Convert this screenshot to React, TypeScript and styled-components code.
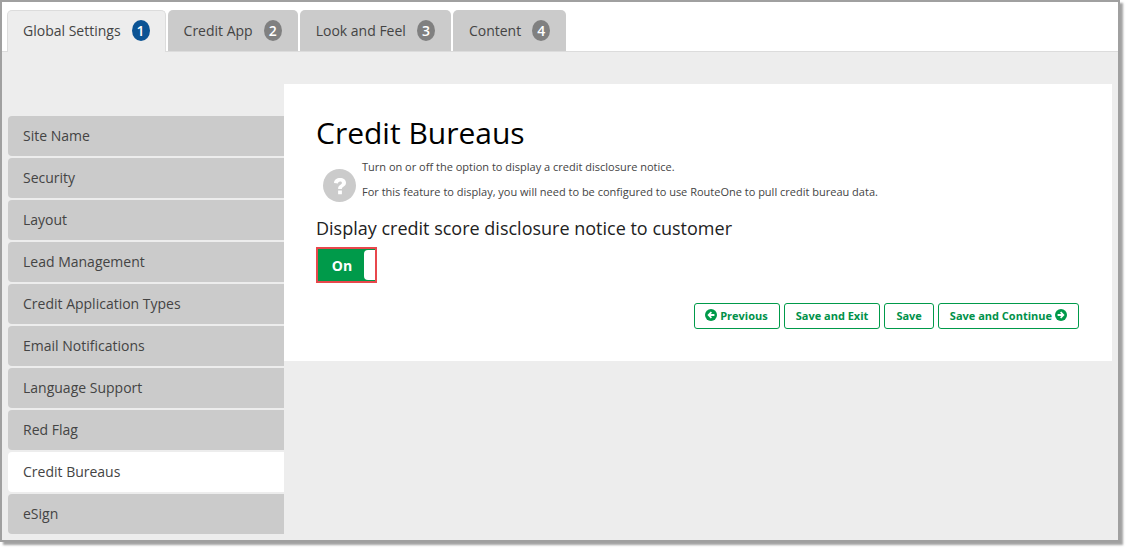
import React from "react";
import styled, { createGlobalStyle } from "styled-components";

const Global = createGlobalStyle`
  html, body { margin: 0; padding: 0; background: #fff; min-height: 549px; }
  body { font-family: "Open Sans", "Liberation Sans", sans-serif; color: #333; }
  * { box-sizing: border-box; }
`;

const Shot = styled.div`
  width: 1120px;
  height: 542px;
  border: 2px solid #a0a0a0;
  background: #ededed;
  box-shadow: 3px 3px 2px rgba(100, 100, 100, 0.6);
  display: flex;
  flex-direction: column;
`;

const TabBar = styled.div`
  height: 50px;
  background: #fff;
  border-bottom: 1px solid #dcdcdc;
  padding: 8px 0 0 5px;
  display: flex;
  gap: 2px;
  align-items: flex-end;
`;

const Tab = styled.div<{ $active?: boolean }>`
  height: ${(p) => (p.$active ? 42 : 41)}px;
  margin-bottom: ${(p) => (p.$active ? -1 : 0)}px;
  padding: 0 ${(p) => (p.$active ? 15 : 16)}px ${(p) => (p.$active ? 2 : 0)}px;
  display: flex;
  align-items: center;
  gap: 11px;
  border-radius: 5px 5px 0 0;
  font-size: 14px;
  color: #444;
  background: ${(p) => (p.$active ? "#ededed" : "#cbcbcb")};
  border: ${(p) => (p.$active ? "1px solid #dcdcdc" : "none")};
  border-bottom: none;
`;

const Badge = styled.span<{ $active?: boolean }>`
  width: 18px;
  height: 21px;
  border-radius: 50%;
  background: ${(p) => (p.$active ? "#0b5394" : "#808080")};
  color: #fff;
  font-size: 14px;
  font-weight: 600;
  display: flex;
  align-items: center;
  justify-content: center;
`;

const Body = styled.div`
  flex: 1;
  display: flex;
  padding: 32px 6px 0 6px;
  min-height: 0;
`;

const Side = styled.nav`
  width: 276px;
  flex: none;
  padding-top: 32px;
  display: flex;
  flex-direction: column;
  gap: 2px;
`;

const SideItem = styled.div<{ $active?: boolean }>`
  height: 40px;
  flex: none;
  padding: 0 0 2px 15px;
  display: flex;
  align-items: center;
  font-size: 14px;
  color: #444;
  border-radius: 4px 0 0 4px;
  background: ${(p) => (p.$active ? "#fff" : "#cbcbcb")};
`;

const Panel = styled.main`
  flex: 1;
  height: 277px;
  background: #fff;
  padding: 29px 33px 0 32px;
`;

const Title = styled.h1`
  margin: 0;
  font-size: 30px;
  line-height: 40px;
  font-weight: 400;
  color: #000;
`;

const Help = styled.div`
  display: flex;
  margin-top: 6px;
  height: 57px;
`;

const HelpIcon = styled.svg`
  width: 33px;
  height: 33px;
  flex: none;
  margin: 10px 6px 0 7px;
  display: block;
`;

const HelpText = styled.div`
  font-size: 11px;
  color: #444;
  p { margin: 0 0 10px; line-height: 15px; }
`;

const Sub = styled.h2`
  margin: 0;
  font-size: 18px;
  line-height: 25px;
  font-weight: 400;
  color: #222;
`;

const Toggle = styled.div`
  margin-top: 6px;
  width: 61px;
  height: 36px;
  border: 2px solid #e8474c;
  background: #009a4a;
  padding: 1px 0;
  display: flex;
  align-items: stretch;
`;

const ToggleLabel = styled.span`
  flex: 1;
  display: flex;
  align-items: center;
  justify-content: center;
  color: #fff;
  font-size: 14px;
  font-weight: 700;
  padding-left: 2px;
`;

const Knob = styled.span`
  width: 11px;
  background: #fff;
  border-radius: 4px 0 0 4px;
`;

const Actions = styled.div`
  margin-top: 20px;
  display: flex;
  justify-content: flex-end;
  gap: 4px;
`;

const Btn = styled.button<{ $lead?: boolean }>`
  height: 26px;
  padding: 0 11px 2px ${(p) => (p.$lead ? 10 : 11)}px;
  border: 1px solid #009a4a;
  border-radius: 3px;
  background: #fff;
  color: #00914a;
  font: 700 11px "Open Sans", sans-serif;
  display: flex;
  align-items: center;
  gap: 3px;
`;

const ArrowIcon = ({ dir }: { dir: "l" | "r" }) => (
  <svg width="12" height="12" viewBox="0 0 12 12" style={dir === "l" ? { transform: "scaleX(-1)" } : undefined}>
    <circle cx="6" cy="6" r="6" fill="#009a4a" />
    <path d="M6.2 2.6 9.6 6 6.2 9.4 5 8.2 6.3 6.9H2.6V5.1h3.7L5 3.8z" fill="#fff" />
  </svg>
);

const tabs = ["Global Settings", "Credit App", "Look and Feel", "Content"];
const items = [
  "Site Name",
  "Security",
  "Layout",
  "Lead Management",
  "Credit Application Types",
  "Email Notifications",
  "Language Support",
  "Red Flag",
  "Credit Bureaus",
  "eSign",
];

export default function App() {
  return (
    <>
      <Global />
      <Shot>
        <TabBar>
          {tabs.map((t, i) => (
            <Tab key={t} $active={i === 0}>
              {t}
              <Badge $active={i === 0}>{i + 1}</Badge>
            </Tab>
          ))}
        </TabBar>
        <Body>
          <Side>
            {items.map((t) => (
              <SideItem key={t} $active={t === "Credit Bureaus"}>
                {t}
              </SideItem>
            ))}
          </Side>
          <Panel>
            <Title>Credit Bureaus</Title>
            <Help>
              <HelpIcon viewBox="0 0 33 33">
                <circle cx="16.5" cy="16.5" r="16.5" fill="#cbcbcb" />
                <path
                  d="M11 14C11.2 10.8 13.6 9 17 9c3.5 0 6 1.8 6 4.8 0 2.2-1.2 3.1-2.6 4-1.1.7-1.5 1.1-1.5 2.2h-3.8c0-2.2.7-3.1 2-4 1.1-.8 1.8-1.2 1.8-2.1 0-.9-.8-1.4-1.8-1.4-1.2 0-1.9.7-2.1 1.9zM15.1 21.5h3.8v3.7h-3.8z"
                  fill="#fff"
                />
              </HelpIcon>
              <HelpText>
                <p>Turn on or off the option to display a credit disclosure notice.</p>
                <p>For this feature to display, you will need to be configured to use RouteOne to pull credit bureau data.</p>
              </HelpText>
            </Help>
            <Sub>Display credit score disclosure notice to customer</Sub>
            <Toggle>
              <ToggleLabel>On</ToggleLabel>
              <Knob />
            </Toggle>
            <Actions>
              <Btn $lead><ArrowIcon dir="l" />Previous</Btn>
              <Btn>Save and Exit</Btn>
              <Btn>Save</Btn>
              <Btn>Save and Continue<ArrowIcon dir="r" /></Btn>
            </Actions>
          </Panel>
        </Body>
      </Shot>
    </>
  );
}
